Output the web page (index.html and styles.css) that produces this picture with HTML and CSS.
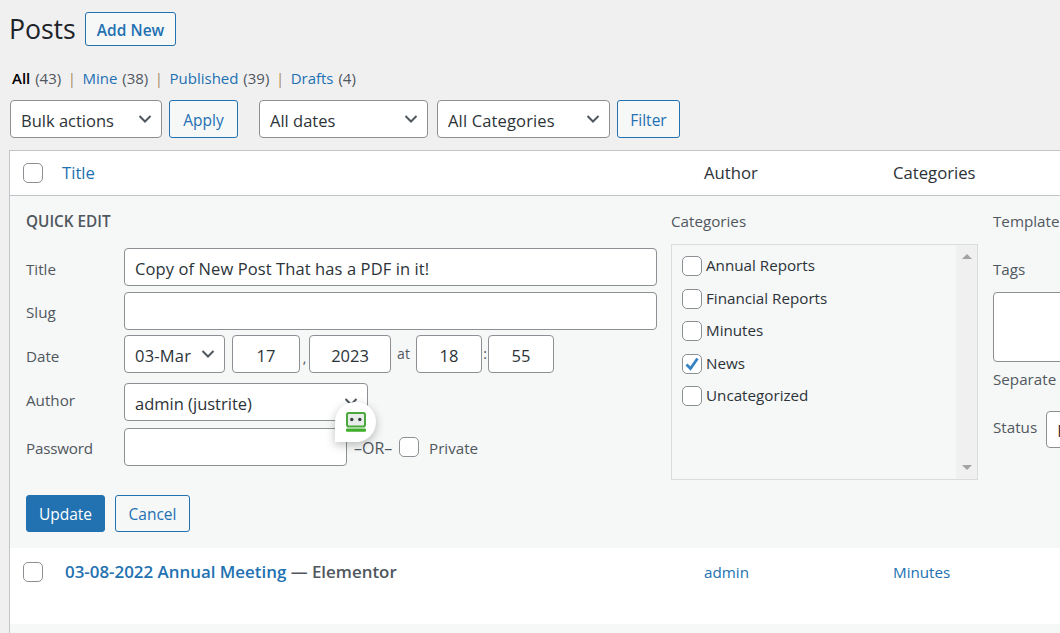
FILE: index.html
```html
<!DOCTYPE html>
<html lang="en">
<head>
<meta charset="utf-8">
<title>Posts</title>
<link rel="stylesheet" href="styles.css">
</head>
<body>
<div class="wrap">
  <header class="head">
    <h1>Posts</h1>
    <a class="btn add-new">Add New</a>
  </header>
  <ul class="subnav">
    <li><a class="current">All</a> <span class="count">(43)</span></li>
    <li class="sep">|</li>
    <li><a>Mine</a> <span class="count">(38)</span></li>
    <li class="sep">|</li>
    <li><a>Published</a> <span class="count">(39)</span></li>
    <li class="sep">|</li>
    <li><a>Drafts</a> <span class="count">(4)</span></li>
  </ul>
  <div class="toolbar">
    <select class="sel w-bulk"><option>Bulk actions</option></select>
    <button class="btn w-apply">Apply</button>
    <select class="sel w-dates"><option>All dates</option></select>
    <select class="sel w-cats"><option>All Categories</option></select>
    <button class="btn w-filter">Filter</button>
  </div>
  <section class="table">
    <div class="thead">
      <input type="checkbox" class="cb">
      <a class="th-title">Title</a>
      <span class="th-author">Author</span>
      <span class="th-cats">Categories</span>
    </div>
    <div class="qe">
      <div class="qe-cols">
        <div class="qe-left">
          <h2 class="qe-title">QUICK EDIT</h2>
          <label class="row r-title"><span class="lab">Title</span><input class="inp grow title-inp" value="Copy of New Post That has a PDF in it!"></label>
          <label class="row r-slug"><span class="lab">Slug</span><input class="inp grow"></label>
          <div class="row r-date">
            <span class="lab">Date</span>
            <select class="sel sel-month"><option>03-Mar</option></select>
            <input class="inp center w-day" value="17"><span class="punct p-comma">,</span>
            <input class="inp center w-year" value="2023"><span class="punct p-at">at</span>
            <input class="inp center w-hour" value="18"><span class="punct p-colon">:</span>
            <input class="inp center w-min" value="55">
          </div>
          <label class="row r-author"><span class="lab">Author</span><select class="sel sel-author"><option>admin (justrite)</option></select></label>
          <div class="row r-pass">
            <span class="lab">Password</span>
            <input class="inp w-pass">
            <span class="or">–OR–</span>
            <input type="checkbox" class="cb cb-private">
            <span class="private">Private</span>
          </div>
          <div class="actions">
            <button class="btn primary">Update</button>
            <button class="btn cancel">Cancel</button>
          </div>
        </div>
        <div class="qe-mid">
          <div class="mid-label">Categories</div>
          <div class="catbox">
            <ul class="catlist">
              <li><input type="checkbox" class="cb"><span>Annual Reports</span></li>
              <li><input type="checkbox" class="cb"><span>Financial Reports</span></li>
              <li><input type="checkbox" class="cb"><span>Minutes</span></li>
              <li><input type="checkbox" class="cb" checked><span>News</span></li>
              <li><input type="checkbox" class="cb"><span>Uncategorized</span></li>
            </ul>
            <div class="scrollbar"><i class="arrow up"></i><i class="arrow down"></i></div>
          </div>
        </div>
        <div class="qe-right">
          <div class="right-label">Template</div>
          <div class="right-label tags-label">Tags</div>
          <textarea class="tags"></textarea>
          <div class="right-label sep-label">Separate</div>
          <div class="status-row">
            <span class="right-label status-label">Status</span>
            <select class="sel sel-status"><option>Published</option></select>
          </div>
        </div>
      </div>
    </div>
    <div class="post-row">
      <input type="checkbox" class="cb">
      <div class="post-title"><a>03-08-2022 Annual Meeting</a> — Elementor</div>
      <a class="post-author">admin</a>
      <a class="post-cat">Minutes</a>
    </div>
    <div class="stripe"></div>
  </section>
</div>
<div class="bubble">
  <svg width="20" height="20" viewBox="0 0 20 20" aria-hidden="true">
    <rect x="1" y="1" width="18" height="13.500" rx="1.800" fill="#e9ece9" stroke="#4aa83c" stroke-width="2"/>
    <circle cx="5.800" cy="7.500" r="1.700" fill="#3a3f44"/>
    <circle cx="13.800" cy="7.500" r="1.700" fill="#3a3f44"/>
    <rect x="0" y="16.500" width="20" height="3.200" rx="1" fill="#3fae2a"/>
  </svg>
</div>
</body>
</html>
```
FILE: styles.css
```css
* { box-sizing: border-box; }
html, body { margin: 0; padding: 0; height: 633px; overflow: hidden; }
body {
  background: #f0f0f1;
  color: #3c434a;
  font-family: "Open Sans", "Noto Sans", "Liberation Sans", sans-serif;
  font-size: 16px;
  position: relative;
}
a { color: #2271b1; text-decoration: none; }
.wrap { width: 1300px; padding: 12px 0 0 9px; }

.head { display: flex; align-items: center; height: 34px; }
h1 { margin: 0; font-size: 26.700px; font-weight: 400; color: #1d2327; line-height: 34px; width: 76px; letter-spacing: -.1px; }

.btn {
  display: inline-flex; align-items: center; justify-content: center;
  font: inherit; font-size: 15.500px;
  color: #2271b1; background: #f6f7f7;
  border: 1px solid #2271b1; border-radius: 3px;
  padding: 2px 0 0; cursor: pointer;
}
.add-new { width: 91px; height: 34px; font-weight: 600; letter-spacing: .05px; }

.subnav { list-style: none; margin: 21px 0 0 3px; padding: 0; display: flex; height: 23px; line-height: 23px; font-size: 15px; word-spacing: 1px; }
.subnav li { white-space: pre; }
.subnav .sep { color: #a7895f; margin: 0 6.500px 0 6.500px; }
.subnav .current { color: #000; font-weight: 600; }
.count { color: #50575e; }

.toolbar { display: flex; align-items: center; margin-top: 10px; margin-left: 1px; height: 38px; }
.sel {
  appearance: none; -webkit-appearance: none;
  font: inherit; font-size: 16.500px; color: #2c3338;
  height: 38px; padding: 2px 24px 0 10px;
  background: #fff url("data:image/svg+xml;charset=utf-8,%3Csvg xmlns='http://www.w3.org/2000/svg' width='16' height='16' viewBox='0 0 16 16'%3E%3Cpath d='M2.500 5l5.500 5.500L13.500 5' fill='none' stroke='%2350575e' stroke-width='2'/%3E%3C/svg%3E") no-repeat right 8px center;
  border: 1px solid #8c8f94; border-radius: 4px;
}
.w-bulk { width: 152px; }
.w-apply { width: 69px; height: 38px; margin-left: 7px; margin-right: 21px; }
.w-dates { width: 169px; margin-right: 9px; }
.w-cats { width: 173px; margin-right: 7px; letter-spacing: .15px; }
.w-filter { width: 63px; height: 38px; }

.table { margin-top: 12px; border: 1px solid #c3c4c7; border-right: 0; border-bottom: 0; background: #fff; }
.cb {
  appearance: none; -webkit-appearance: none;
  width: 20px; height: 20px; margin: 0; flex: none;
  background: #fff; border: 1px solid #8c8f94; border-radius: 5px;
}
.cb:checked {
  background: #fff url("data:image/svg+xml;charset=utf-8,%3Csvg xmlns='http://www.w3.org/2000/svg' width='18' height='18' viewBox='0 0 18 18'%3E%3Cpath d='M3.500 9.500l4 4L14.500 3.500' fill='none' stroke='%233582c4' stroke-width='2.800'/%3E%3C/svg%3E") no-repeat center;
}

.thead { height: 45px; display: flex; align-items: center; padding-left: 13px; border-bottom: 1px solid #c3c4c7; font-size: 16.700px; line-height: 24px; color: #2c3338; }
.th-title { margin-left: 19px; width: 642px; }
.th-author { width: 189px; }

.qe { background: #f6f7f7; height: 352px; padding: 15px 0 0 16px; }
.qe-cols { display: flex; }
.qe-left { width: 631px; }
.qe-title { margin: 0; height: 20px; line-height: 20px; font-size: 15.300px; font-weight: 600; color: #50575e; }

.row { display: flex; align-items: center; height: 38px; }
.lab { width: 98px; flex: none; font-size: 15.200px; color: #50575e; }
.r-title .lab { padding-top: 4px; }
.r-slug .lab { padding-top: 2px; }
.r-date .lab { padding-top: 4px; }
.r-author .lab { padding-bottom: 4px; }
.r-pass .lab { padding-top: 2px; letter-spacing: -.2px; }
.r-title { margin-top: 17px; }
.r-slug { margin-top: 6px; }
.r-date { margin-top: 5px; }
.r-author { margin-top: 10px; }
.r-pass { margin-top: 7px; }

.inp {
  font: inherit; font-size: 16.500px; color: #2c3338;
  height: 38px; padding: 3px 10px 0;
  background: #fff; border: 1px solid #8c8f94; border-radius: 4px;
}
.grow { flex: 1; min-width: 0; width: 533px; }
.title-inp { letter-spacing: .1px; }
.center { text-align: center; }
.sel-month { width: 101px; margin-right: 7px; letter-spacing: .2px; }
.w-day { width: 68px; }
.w-year { width: 82px; }
.w-hour { width: 66px; }
.w-min { width: 66px; }
.punct { font-size: 14px; color: #50575e; text-align: center; }
.p-comma { width: 9px; padding-top: 6px; }
.p-at { width: 25px; margin-top: -2px; }
.p-colon { width: 6px; margin-top: -2px; }
.sel-author { width: 244px; }
.w-pass { width: 223px; }
.or { font-size: 16px; color: #50575e; margin-left: 7px; width: 45px; padding-top: 2px; }
.private { font-size: 15.200px; color: #50575e; margin-left: 10px; padding-top: 2px; }
.actions { display: flex; margin-top: 29px; }
.actions .btn { height: 37px; padding-top: 0; }
.primary { width: 79px; background: #2271b1; color: #fff; }
.cancel { width: 75px; margin-left: 10px; }

.qe-mid { width: 322px; margin-left: 14px; }
.mid-label { height: 20px; line-height: 20px; font-size: 15.200px; color: #50575e; }
.catbox { margin-top: 13px; width: 307px; height: 236px; display: flex; border: 1px solid #dcdcde; }
.catlist { list-style: none; margin: 0; padding: 11px 0 0 10px; flex: 1; }
.catlist li { display: flex; height: 32.500px; align-items: flex-start; font-size: 15.200px; line-height: 18px; color: #2c3338; }
.catlist .cb { margin-right: 4px; }
.scrollbar { width: 21px; background: #f0f0f1; display: flex; flex-direction: column; justify-content: space-between; align-items: center; padding: 9px 0; }
.arrow { width: 0; height: 0; border-left: 5px solid transparent; border-right: 5px solid transparent; }
.up { border-bottom: 5px solid #a3a3a3; }
.down { border-top: 5px solid #a3a3a3; }

.qe-right { width: 300px; }
.right-label { height: 20px; line-height: 20px; font-size: 15.200px; color: #50575e; white-space: nowrap; }
.tags-label { margin-top: 28px; }
.tags { display: block; margin-top: 13px; width: 270px; height: 70px; background: #fff; border: 1px solid #8c8f94; border-radius: 4px; resize: none; }
.sep-label { margin-top: 7px; }
.status-row { display: flex; align-items: center; margin-top: 22px; height: 37px; }
.status-label { margin-bottom: 5px; }
.sel-status { width: 160px; height: 37px; margin-left: 9px; }

.post-row { height: 76px; display: flex; align-items: flex-start; padding: 14px 0 0 13px; background: #fff; position: relative; }
.post-title { width: 639px; margin-left: 22px; font-size: 16.900px; font-weight: 600; line-height: 20px; color: #50575e; }
.post-author { width: 189px; font-size: 15.200px; line-height: 20px; color: #2271b1; }
.post-cat { font-size: 15.200px; line-height: 20px; }
.stripe { height: 20px; background: #f6f7f7; }

.bubble {
  position: absolute; left: 335px; top: 402px;
  width: 41px; height: 40px;
  display: flex; align-items: center; justify-content: center;
  background: #fff;
  border-radius: 20px 20px 20px 0;
  box-shadow: 0 3px 10px rgba(0,0,0,.25);
}
```
